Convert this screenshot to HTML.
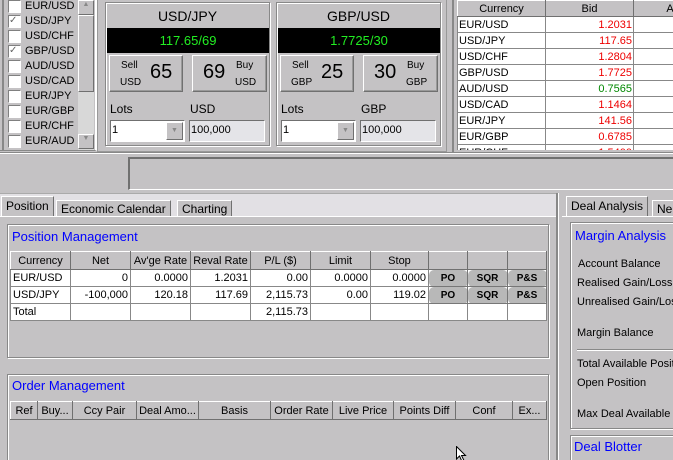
<!DOCTYPE html>
<html style="overflow:hidden;width:673px;height:460px"><head><meta charset="utf-8"><style>
*{box-sizing:border-box;margin:0;padding:0}
body{width:673px;height:460px;overflow:hidden;background:#c4c2c4;font-family:"Liberation Sans",sans-serif;font-size:11px;color:#000;position:relative}
.a{position:absolute;white-space:nowrap}
.raised{border:1px solid;border-color:#fff #707070 #707070 #fff}
.sunk{border:1px solid;border-color:#707070 #fff #fff #707070}
.etched{border:1px solid #888;box-shadow:inset 1px 1px 0 #fff,1px 1px 0 #fff}
.cb{position:absolute;left:8px;width:13px;height:13px;background:#fff;border:1px solid;border-color:#808080 #fff #fff #808080}
.cl{position:absolute;left:25px;font-size:11px}
.blue{color:#0000ff;font-size:13px}
table{border-collapse:collapse;position:absolute;background:#fff;table-layout:fixed}
td{border:1px solid #888;padding:0 2px;height:17px;font-size:11px;white-space:nowrap;overflow:hidden}
th{background:#c4c2c4;font-weight:normal;border:1px solid;border-color:#fff #707070 #707070 #fff;font-size:11px;height:18px;white-space:nowrap;overflow:hidden}
.rt td{height:16px;line-height:14px;padding:0 1px}
.r{text-align:right}
.btn{background:#b8b8b8;font-weight:bold;font-size:10px;text-align:center;border-radius:5px;border:1px solid;border-color:#eee #777 #777 #eee;padding:0}
.tab{position:absolute;top:198px;height:19px;border:1px solid;border-color:#fff #707070 #c4c2c4 #fff;background:#c4c2c4;font-size:12px;padding:2px 4px;white-space:nowrap}
</style></head><body>
<div class="a" style="left:0;top:0;width:97px;height:151px;border-right:2px solid #fff;border-bottom:1px solid #888"></div>
<div class="a" style="left:2px;top:0;width:2px;height:150px;background:#888"></div>
<div class="cb" style="top:0px"></div><div class="cl" style="top:0">EUR/USD</div>
<div class="cb" style="top:15px;color:#666;font-size:10px;line-height:10px">✓</div><div class="cl" style="top:15px">USD/JPY</div>
<div class="cb" style="top:30px"></div><div class="cl" style="top:30px">USD/CHF</div>
<div class="cb" style="top:45px;color:#666;font-size:10px;line-height:10px">✓</div><div class="cl" style="top:45px">GBP/USD</div>
<div class="cb" style="top:60px"></div><div class="cl" style="top:60px">AUD/USD</div>
<div class="cb" style="top:75px"></div><div class="cl" style="top:75px">USD/CAD</div>
<div class="cb" style="top:90px"></div><div class="cl" style="top:90px">EUR/JPY</div>
<div class="cb" style="top:105px"></div><div class="cl" style="top:105px">EUR/GBP</div>
<div class="cb" style="top:120px"></div><div class="cl" style="top:120px">EUR/CHF</div>
<div class="cb" style="top:135px"></div><div class="cl" style="top:135px">EUR/AUD</div>
<div class="a" style="left:78px;top:0;width:16px;height:150px;background:#d8d8d8"></div>
<div class="a raised" style="left:78px;top:0;width:16px;height:15px;background:#c4c2c4;font-size:7px;text-align:center;color:#888">▲</div>
<div class="a raised" style="left:78px;top:15px;width:16px;height:77px;background:#c4c2c4"></div>
<div class="a raised" style="left:78px;top:134px;width:16px;height:15px;background:#c4c2c4;font-size:7px;text-align:center;color:#888">▼</div>
<div class="a" style="left:97px;top:0;width:350px;height:152px;border:1px solid #999;border-top:none"></div>

<div class="a etched" style="left:105px;top:2px;width:165px;height:144px"></div>
<div class="a" style="left:105px;top:8px;width:165px;text-align:center;font-size:14px">USD/JPY</div>
<div class="a" style="left:107px;top:28px;width:162px;height:25px;background:#000;color:#22ee22;font-size:13px;text-align:center;line-height:25px">117.65/69</div>
<div class="a raised" style="left:109px;top:55px;width:74px;height:37px;box-shadow:inset -1px -1px 0 #999"></div>
<div class="a" style="left:121px;top:60px;font-size:10px">Sell</div><div class="a" style="left:120px;top:77px;font-size:10px">USD</div>
<div class="a" style="left:150px;top:61px;font-size:20px">65</div>
<div class="a raised" style="left:192px;top:55px;width:75px;height:37px;box-shadow:inset -1px -1px 0 #999"></div>
<div class="a" style="left:203px;top:61px;font-size:20px">69</div>
<div class="a" style="left:236px;top:60px;font-size:10px">Buy</div><div class="a" style="left:235px;top:77px;font-size:10px">USD</div>
<div class="a" style="left:110px;top:102px;font-size:12px">Lots</div><div class="a" style="left:190px;top:102px;font-size:12px">USD</div>
<div class="a sunk" style="left:110px;top:120px;width:75px;height:22px;background:#fff;padding:3px 1px">1</div>
<div class="a raised" style="left:166px;top:122px;width:17px;height:18px;background:#c4c2c4;font-size:7px;text-align:center;color:#888;line-height:16px">▼</div>
<div class="a sunk" style="left:189px;top:120px;width:76px;height:22px;background:#e4e4e8;padding:3px 1px">100,000</div>

<div class="a etched" style="left:276px;top:2px;width:165px;height:144px"></div>
<div class="a" style="left:276px;top:8px;width:165px;text-align:center;font-size:14px">GBP/USD</div>
<div class="a" style="left:278px;top:28px;width:162px;height:25px;background:#000;color:#22ee22;font-size:13px;text-align:center;line-height:25px">1.7725/30</div>
<div class="a raised" style="left:280px;top:55px;width:74px;height:37px;box-shadow:inset -1px -1px 0 #999"></div>
<div class="a" style="left:292px;top:60px;font-size:10px">Sell</div><div class="a" style="left:291px;top:77px;font-size:10px">GBP</div>
<div class="a" style="left:321px;top:61px;font-size:20px">25</div>
<div class="a raised" style="left:363px;top:55px;width:75px;height:37px;box-shadow:inset -1px -1px 0 #999"></div>
<div class="a" style="left:374px;top:61px;font-size:20px">30</div>
<div class="a" style="left:407px;top:60px;font-size:10px">Buy</div><div class="a" style="left:406px;top:77px;font-size:10px">GBP</div>
<div class="a" style="left:281px;top:102px;font-size:12px">Lots</div><div class="a" style="left:361px;top:102px;font-size:12px">GBP</div>
<div class="a sunk" style="left:281px;top:120px;width:75px;height:22px;background:#fff;padding:3px 1px">1</div>
<div class="a raised" style="left:337px;top:122px;width:17px;height:18px;background:#c4c2c4;font-size:7px;text-align:center;color:#888;line-height:16px">▼</div>
<div class="a sunk" style="left:360px;top:120px;width:76px;height:22px;background:#e4e4e8;padding:3px 1px">100,000</div>

<div class="a" style="left:452px;top:0;width:2px;height:154px;background:#888"></div>
<div class="a" style="left:455px;top:0;width:218px;height:150px;overflow:hidden;background:#c4c2c4">
<table class="rt" style="left:2px;top:0;width:260px">
<colgroup><col style="width:88px"><col style="width:88px"><col style="width:84px"></colgroup>
<tr><th style="height:16px;line-height:14px">Currency</th><th style="height:16px;line-height:14px">Bid</th><th style="height:16px;line-height:14px">Ask</th></tr>
<tr><td>EUR/USD</td><td class="r" style="color:#e00">1.2031</td><td></td></tr>
<tr><td>USD/JPY</td><td class="r" style="color:#e00">117.65</td><td></td></tr>
<tr><td>USD/CHF</td><td class="r" style="color:#e00">1.2804</td><td></td></tr>
<tr><td>GBP/USD</td><td class="r" style="color:#e00">1.7725</td><td></td></tr>
<tr><td>AUD/USD</td><td class="r" style="color:#080">0.7565</td><td></td></tr>
<tr><td>USD/CAD</td><td class="r" style="color:#e00">1.1464</td><td></td></tr>
<tr><td>EUR/JPY</td><td class="r" style="color:#e00">141.56</td><td></td></tr>
<tr><td>EUR/GBP</td><td class="r" style="color:#e00">0.6785</td><td></td></tr>
<tr><td>EUR/CHF</td><td class="r" style="color:#e00">1.5400</td><td></td></tr>
</table></div>
<div class="a" style="left:0;top:152px;width:673px;height:2px;border-top:1px solid #888;border-bottom:1px solid #fff"></div>

<div class="a sunk" style="left:128px;top:157px;width:550px;height:33px;border-width:2px 1px 1px 2px"></div>

<div class="a" style="left:0;top:193px;width:556px;height:24px;background:#e2e0e4;border-top:1px solid #aaa"></div>
<div class="tab" style="left:1px;top:196px;height:21px;font-size:12px">Position</div>
<div class="tab" style="left:56px;top:200px;height:17px;padding-top:1px">Economic Calendar</div>
<div class="tab" style="left:177px;top:200px;height:17px;padding-top:1px">Charting</div>
<div class="a" style="left:556px;top:193px;width:3px;height:267px;background:#888;border-right:1px solid #fff"></div>
<div class="a" style="left:0;top:216px;width:556px;height:1px;background:#fff"></div>

<div class="a etched" style="left:7px;top:224px;width:542px;height:134px"></div>
<div class="a blue" style="left:12px;top:229px">Position Management</div>
<table style="left:10px;top:251px;width:536px">
<colgroup><col style="width:60px"><col style="width:60px"><col style="width:60px"><col style="width:60px"><col style="width:60px"><col style="width:60px"><col style="width:58px"><col style="width:39px"><col style="width:40px"><col style="width:39px"></colgroup>
<tr><th>Currency</th><th>Net</th><th>Av'ge Rate</th><th>Reval Rate</th><th>P/L ($)</th><th>Limit</th><th>Stop</th><th></th><th></th><th></th></tr>
<tr><td>EUR/USD</td><td class="r">0</td><td class="r">0.0000</td><td class="r">1.2031</td><td class="r">0.00</td><td class="r">0.0000</td><td class="r">0.0000</td><td class="btn">PO</td><td class="btn">SQR</td><td class="btn">P&amp;S</td></tr>
<tr><td>USD/JPY</td><td class="r">-100,000</td><td class="r">120.18</td><td class="r">117.69</td><td class="r">2,115.73</td><td class="r">0.00</td><td class="r">119.02</td><td class="btn">PO</td><td class="btn">SQR</td><td class="btn">P&amp;S</td></tr>
<tr><td>Total</td><td></td><td></td><td></td><td class="r">2,115.73</td><td></td><td></td><td></td><td></td><td></td></tr>
</table>

<div class="a etched" style="left:7px;top:374px;width:542px;height:90px"></div>
<div class="a blue" style="left:12px;top:378px">Order Management</div>
<table style="left:10px;top:401px;width:536px;background:#c4c2c4">
<colgroup><col style="width:27px"><col style="width:35px"><col style="width:64px"><col style="width:62px"><col style="width:72px"><col style="width:62px"><col style="width:61px"><col style="width:62px"><col style="width:57px"><col style="width:34px"></colgroup>
<tr><th>Ref</th><th>Buy...</th><th>Ccy Pair</th><th>Deal Amo...</th><th>Basis</th><th>Order Rate</th><th>Live Price</th><th>Points Diff</th><th>Conf</th><th>Ex...</th></tr>
</table>
<svg class="a" style="left:456px;top:446px" width="12" height="16"><path d="M0.5 0.5V13L3.5 10L6 15.5L8 14.5L5.5 9.5H9.5Z" fill="#fff" stroke="#000"/></svg>

<div class="tab" style="left:566px;top:196px;height:21px;font-size:12px">Deal Analysis</div>
<div class="tab" style="left:652px;top:200px;height:17px;font-size:12px;padding-top:1px">Ne</div>
<div class="a" style="left:562px;top:216px;width:111px;height:1px;background:#fff"></div>
<div class="a etched" style="left:570px;top:222px;width:110px;height:207px"></div>
<div class="a blue" style="left:575px;top:228px">Margin Analysis</div>
<div class="a" style="left:578px;top:258px">Account Balance</div>
<div class="a" style="left:577px;top:277px">Realised Gain/Loss</div>
<div class="a" style="left:577px;top:296px">Unrealised Gain/Loss</div>
<div class="a" style="left:577px;top:327px">Margin Balance</div>
<div class="a" style="left:577px;top:349px;width:96px;height:2px;border-top:1px solid #888;border-bottom:1px solid #fff"></div>
<div class="a" style="left:577px;top:358px">Total Available Position</div>
<div class="a" style="left:577px;top:377px">Open Position</div>
<div class="a" style="left:577px;top:408px">Max Deal Available</div>
<div class="a etched" style="left:570px;top:435px;width:110px;height:40px"></div>
<div class="a blue" style="left:574px;top:439px">Deal Blotter</div>
</body></html>
